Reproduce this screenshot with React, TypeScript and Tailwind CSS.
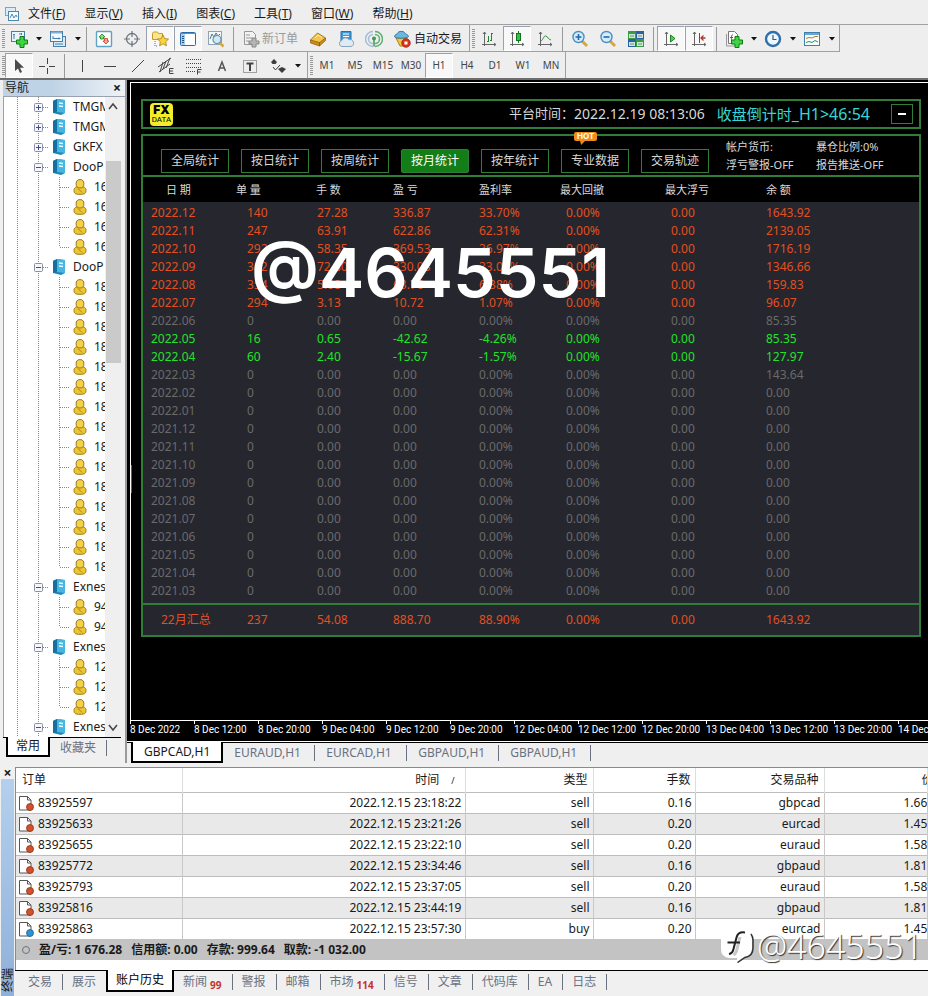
import type { ReactNode } from "react";
import clsx from "clsx";

/* ---------- icons ---------- */

const Svg = ({ children, size = 18 }: { children: ReactNode; size?: number }) => (
  <svg width={size} height={size} viewBox="0 0 18 18" fill="none" className="shrink-0" aria-hidden="true">
    {children}
  </svg>
);

const Plus = () => (
  <path d="M10 6.500h4v3.500h3.500v4H14v3.500h-4V14H6.500v-4H10z" fill="#3fd542" stroke="#0b7d12" />
);

const Axes = () => (
  <path d="M4.500 2v14M2 14.500h14M3 4l1.500-2L6 4M14 13l2 1.500-2 1.500" stroke="#666" />
);

const icons = {
  newChart: (
    <Svg>
      <rect x="1.500" y="1.500" width="13" height="10" fill="#eaf4fb" stroke="#4580ab" />
      <path d="M4 4v5M3 5l1-1 1 1M9 4h3M11 3l1 1-1 1" stroke="#4580ab" />
      <Plus />
    </Svg>
  ),
  profiles: (
    <Svg>
      <rect x="4.500" y="6.500" width="12" height="10" fill="#d9eaf6" stroke="#4580ab" />
      <rect x="1.500" y="1.500" width="12" height="10" fill="#f3f9fd" stroke="#4580ab" />
      <path d="M2 2.500h11" stroke="#7fb1d4" strokeWidth="2" />
      <path d="M4 6v3M4 8.500h7M10 7.500l1 1-1 1M6 14h8" stroke="#4580ab" />
    </Svg>
  ),
  market: (
    <Svg>
      <rect x="1.500" y="1.500" width="15" height="15" rx="1" fill="#fdfefe" stroke="#5fa3c4" strokeWidth="1.400" />
      <path d="M7 4l3 3H8.500v2h-3V7H4z" fill="#8fe07a" stroke="#16801c" strokeWidth=".8" />
      <path d="M11 14l-3-3h1.500V8.500h3V11H14z" fill="#fba58f" stroke="#c03a22" strokeWidth=".8" />
    </Svg>
  ),
  target: (
    <Svg>
      <circle cx="9" cy="9" r="5.500" stroke="#6c757e" strokeWidth="1.300" />
      <path d="M9 1v6M9 11v6M1 9h6M11 9h6" stroke="#6c757e" strokeWidth="1.200" />
    </Svg>
  ),
  star: (
    <Svg>
      <path d="M1.500 3.500l1-1.500h4l1 1.500h4v6h-10z" fill="#fbe58a" stroke="#c79a22" />
      <path d="M4 11v5h3" stroke="#777" strokeDasharray="1 1" />
      <path d="M12 5l1.700 3.600 3.800.5-2.800 2.700.7 4-3.400-2-3.400 2 .7-4L6.500 9.100l3.800-.5z" fill="#fbd33a" stroke="#a97c12" strokeWidth=".8" />
    </Svg>
  ),
  dataWindow: (
    <Svg>
      <rect x="1.500" y="2.500" width="15" height="13" rx="1" fill="#fdfefe" stroke="#2a6cab" />
      <path d="M2 3.500h14" stroke="#4f94cf" />
      <rect x="2" y="4" width="4" height="11" fill="#a8cdea" />
      <path d="M3 6.500h2M3 8.500h2M3 10.500h2M3 12.500h2" stroke="#24527e" />
    </Svg>
  ),
  tester: (
    <Svg>
      <rect x="1.500" y="1.500" width="13" height="13" fill="#f4f7f9" stroke="#92a3b0" />
      <path d="M3 9l2-5 2 3 2-4 2 3 2-2" stroke="#577" />
      <path d="M12.500 12.500l4 4" stroke="#d9a441" strokeWidth="2.500" />
      <circle cx="10" cy="9.500" r="4" fill="#cfe6f5" fillOpacity=".85" stroke="#5b92ba" strokeWidth="1.200" />
    </Svg>
  ),
  order: (
    <Svg>
      <path d="M2.500 1.500h8l3 3v10h-11z" fill="#f2f2f2" stroke="#989898" />
      <path d="M4 5h4M4 8h6M4 11h3" stroke="#989898" />
      <path d="M10 8h4v3h3v3h-3v3h-4v-3H7v-3h3z" fill="#b5b5b5" stroke="#888" />
    </Svg>
  ),
  gold: (
    <Svg>
      <path d="M1.500 10l7-7 8 5-6 7z" fill="#f3c746" stroke="#a9771a" />
      <path d="M1.500 10l9 2.500v3.500L1.500 13zM10.500 12.500l6-4.500v2.500l-6 5.500z" fill="#c98b22" stroke="#8b5c10" strokeWidth=".7" />
      <path d="M6 8l3-3 4 2.500" stroke="#fdeeb0" />
    </Svg>
  ),
  cloud: (
    <Svg>
      <path d="M4 1.500h10v10H4z" fill="#3f9bd8" stroke="#2273ab" />
      <path d="M6 4h6M6 6.500h6" stroke="#fff" />
      <path d="M5 16.500a3 3 0 01-.3-5.900A4 4 0 0112 9.800a3.400 3.400 0 012 6.700z" fill="#dfeaf3" stroke="#86a4c0" />
    </Svg>
  ),
  signal: (
    <Svg>
      <path d="M10 4.500a4.500 4.500 0 010 9M10 1.500a7.500 7.500 0 010 15" stroke="#5fae72" strokeWidth="1.500" />
      <path d="M8 4.500a4.500 4.500 0 000 9M8 1.500a7.500 7.500 0 000 15" stroke="#a3bfd6" strokeWidth="1.500" />
      <circle cx="9" cy="8.500" r="2" fill="#3c9b50" />
      <path d="M9 9v7.500" stroke="#3c9b50" strokeWidth="1.500" />
    </Svg>
  ),
  auto: (
    <Svg>
      <path d="M3 8h11l-3 8H7z" fill="#f2c53b" stroke="#b07f15" />
      <path d="M1.500 6.500c0-2 3-2 3.500-4 .5-1.500 6-1.500 6.500 0 .5 2 4 2 4 4s-14 2.500-14 0z" fill="#6fb6dd" stroke="#3678a3" />
      <circle cx="13" cy="13" r="4.300" fill="#d8351d" stroke="#9b1d0c" strokeWidth=".7" />
      <rect x="11.500" y="11.500" width="3" height="3" fill="#fff" />
    </Svg>
  ),
  bars: (
    <Svg>
      <Axes />
      <path d="M8.500 6v6M7 11.500h1.500M11.500 3v8M11.500 3.500H13M10 10.500h1.500" stroke="#1d8a2c" />
    </Svg>
  ),
  candles: (
    <Svg>
      <Axes />
      <path d="M10.500 1v12" stroke="#1d7a2a" />
      <rect x="8.500" y="3.500" width="4" height="7" fill="#35c244" stroke="#15701f" />
    </Svg>
  ),
  line: (
    <Svg>
      <Axes />
      <path d="M5 11c2-1 3-6 5-5 2 1 2 3 5 4" stroke="#2c8f3a" />
    </Svg>
  ),
  zoomIn: (
    <Svg>
      <path d="M11 11l5 5" stroke="#d8a73d" strokeWidth="3" />
      <circle cx="7.500" cy="7" r="5.500" fill="#d4ebfa" stroke="#4a8fc2" strokeWidth="1.400" />
      <path d="M4.500 7h6M7.500 4v6" stroke="#2368a2" strokeWidth="1.600" />
    </Svg>
  ),
  zoomOut: (
    <Svg>
      <path d="M11 11l5 5" stroke="#d8a73d" strokeWidth="3" />
      <circle cx="7.500" cy="7" r="5.500" fill="#d4ebfa" stroke="#4a8fc2" strokeWidth="1.400" />
      <path d="M4.500 7h6" stroke="#2368a2" strokeWidth="1.600" />
    </Svg>
  ),
  tile: (
    <Svg>
      <rect x="1" y="1" width="8" height="8" fill="#3a9a45" />
      <rect x="9" y="1" width="8" height="8" fill="#2c5fa6" />
      <rect x="1" y="9" width="8" height="8" fill="#2c5fa6" />
      <rect x="9" y="9" width="8" height="8" fill="#3a9a45" />
      <path d="M2 4h6v4H2zM10 4h6v4h-6zM2 12h6v4H2zM10 12h6v4h-6z" fill="#cfe6d6" />
      <path d="M3 6h4M11 6h4M3 14h4M11 14h4" stroke="#5b9a72" />
    </Svg>
  ),
  scroll: (
    <Svg>
      <Axes />
      <path d="M8.500 5v7l4.500-3.500z" fill="#5ecb55" stroke="#17841f" />
    </Svg>
  ),
  shift: (
    <Svg>
      <Axes />
      <path d="M9.500 3v10" stroke="#555" />
      <path d="M15.500 8h-4M13.500 5.500L11 8l2.500 2.500" stroke="#b0382c" strokeWidth="1.300" />
    </Svg>
  ),
  indicators: (
    <Svg>
      <path d="M3.500 1.500h6l3 3v9h-9z" fill="#fff" stroke="#777" />
      <path d="M1.500 4v12h9" stroke="#999" />
      <path d="M8 5c-2-.5-1.500 2-1.500 6M5 7.500h3" stroke="#555" />
      <Plus />
    </Svg>
  ),
  clock: (
    <Svg>
      <circle cx="9" cy="9" r="7" fill="#eef7fd" stroke="#2f6fae" strokeWidth="2.400" />
      <path d="M9 5v4.500h3.500" stroke="#3a5a78" strokeWidth="1.200" />
    </Svg>
  ),
  template: (
    <Svg>
      <rect x="1.500" y="2.500" width="15" height="13" fill="#fafdfe" stroke="#3f7fae" />
      <path d="M2 4h14" stroke="#68a8d6" strokeWidth="2" />
      <path d="M3 8.500l3-1 3 .5 3-1.500h3" stroke="#b57a25" />
      <path d="M3 12.500l3-1 3 1 3-2 3 1.500" stroke="#2c8f6a" />
    </Svg>
  ),
  cursor: (
    <Svg>
      <path d="M5 2v12l3-2.500 2 4.500 2-1-2-4.200h4z" fill="#4a4a4a" />
    </Svg>
  ),
  cross: (
    <Svg>
      <path d="M9.500 1v6M9.500 11v6M1 9.500h6M11 9.500h6" stroke="#444" />
    </Svg>
  ),
  vline: (
    <Svg>
      <path d="M9.500 3v12" stroke="#444" />
    </Svg>
  ),
  hline: (
    <Svg>
      <path d="M3 9.500h12" stroke="#444" />
    </Svg>
  ),
  trend: (
    <Svg>
      <path d="M3 15L15 3" stroke="#444" />
    </Svg>
  ),
  channel: (
    <Svg>
      <path d="M1 10L14 1M2 15L13 7M6 5L3 15M9 4L6 12M13 1L9 11" stroke="#444" />
      <path d="M16.500 11.500h-4v5h4M12.500 14h3.500" stroke="#444" />
    </Svg>
  ),
  fibo: (
    <Svg>
      <path d="M1 2.500h15M1 6.500h15M1 10.500h15M1 14.500h9" stroke="#444" strokeDasharray="1 1" />
      <path d="M16.500 12.500h-4v5M12.500 15h3" stroke="#444" />
    </Svg>
  ),
  textA: (
    <Svg>
      <path d="M5.500 14L9 5l3.500 9M7 11h4" stroke="#555" strokeWidth="1.500" />
    </Svg>
  ),
  label: (
    <Svg>
      <rect x="2.500" y="3.500" width="13" height="12" stroke="#555" strokeDasharray="1 1" />
      <path d="M5.500 6.500h7M9 6v8" stroke="#444" strokeWidth="2" />
    </Svg>
  ),
  arrows: (
    <Svg>
      <path d="M2 5l3-3 3 3-1.500 2h-3zM9 12l4-2 4 2-4 4z" fill="#3c3c3c" />
      <path d="M4 10l2.500 3L11 8" stroke="#3c3c3c" />
    </Svg>
  ),
};

type IconName = keyof typeof icons;

const BookIcon = () => (
  <svg width="14" height="18" viewBox="0 0 14 18" className="shrink-0" aria-hidden="true">
    <path d="M1 3l4-2 8 1v13l-4 2-8-2z" fill="#1e86b8" />
    <path d="M5 1l8 1v13l-8-1z" fill="#44b6e0" />
    <path d="M1 3l4-2v13l-4 1z" fill="#166f9e" />
    <path d="M7 5l4 .5M7 8l4 .5" stroke="#e9f8ff" strokeWidth="1.300" />
  </svg>
);

const UserIcon = () => (
  <svg width="14" height="16" viewBox="0 0 14 16" className="shrink-0" aria-hidden="true">
    <path d="M1 11.500C1 8.500 3 7.500 7 7.500s6 1 6 4c0 3-1.500 3.800-6 3.800S1 14.500 1 11.500z" fill="#edc531" stroke="#98761a" />
    <ellipse cx="7" cy="4.800" rx="3.900" ry="4.200" fill="#f3d24a" stroke="#98761a" />
    <path d="M5 9.500l4 4" stroke="#a98420" />
  </svg>
);

const DocIcon = ({ buy }: { buy?: boolean }) => (
  <svg width="15" height="16" viewBox="0 0 15 16" className="shrink-0" aria-hidden="true">
    <path d="M.5 1.500h8l3.500 3.500v10H.5z" fill="#fff" stroke="#555" />
    <path d="M8.500 1.500V5H12" fill="none" stroke="#555" />
    <circle cx="11" cy="12" r="3.500" fill={buy ? "#2f93cf" : "#d2502c"} stroke={buy ? "#1c6496" : "#8f2f14"} strokeWidth=".8" />
  </svg>
);

/* ---------- toolbars ---------- */

const menus = [
  ["文件", "F"],
  ["显示", "V"],
  ["插入", "I"],
  ["图表", "C"],
  ["工具", "T"],
  ["窗口", "W"],
  ["帮助", "H"],
];

function Tool({ icon, label, active }: { icon: IconName; label: string; active?: boolean }) {
  return (
    <button
      aria-label={label}
      className={clsx(
        "flex h-[25px] w-7 shrink-0 items-center justify-center border",
        active ? "border-t-gray-400 border-l-gray-400 border-r-white border-b-white bg-[#f8f8f8]" : "border-transparent"
      )}
    >
      {icons[icon]}
    </button>
  );
}

const Caret = () => (
  <button aria-label="更多" className="flex h-6 w-[11px] shrink-0 items-center justify-center">
    <svg width="6" height="4" viewBox="0 0 6 4" aria-hidden="true">
      <path d="M0 0h6L3 3.500z" fill="#111" />
    </svg>
  </button>
);

const Sep = () => (
  <div className="flex w-[7px] shrink-0 justify-center">
    <div className="h-6 w-px bg-[#9a9a9a]" />
  </div>
);

const Grip = () => <div className="ml-[2px] h-5 w-[3px] shrink-0 bg-[repeating-linear-gradient(#999_0_1px,transparent_1px_2px)]" />;

function Toolbars() {
  return (
    <header className="bg-[#eeeeee]">
      <nav className="mt-1 flex h-[21px] items-center border-b border-[#a0a0a0] pl-1">
        <svg width="16" height="16" viewBox="0 0 16 16" fill="none" aria-hidden="true">
          <rect x="1.500" y="1.500" width="10" height="8" fill="#d9ecf7" stroke="#79a7c4" />
          <rect x="4.500" y="5.500" width="10" height="9" fill="#f5fbff" stroke="#4b87ad" />
          <path d="M6 12l2-4 2 4 2-3 1 2" stroke="#4b87ad" />
        </svg>
        <div className="flex gap-[19px] pl-2">
          {menus.map(([name, key]) => (
            <button key={key} className="whitespace-nowrap">
              {name}(<u>{key}</u>)
            </button>
          ))}
        </div>
      </nav>

      <div className="flex">
        <div className="flex h-[27px] items-center border-r border-b border-[#a0a0a0] pt-px pr-[2px]">
          <Grip />
          <Tool icon="newChart" label="新图表" />
          <Caret />
          <Tool icon="profiles" label="配置文件" />
          <Caret />
          <Sep />
          <Tool icon="market" label="市场报价" />
          <Tool icon="target" label="数据窗口" />
          <Tool icon="star" label="导航" active />
          <Tool icon="dataWindow" label="终端" active />
          <Tool icon="tester" label="策略测试" />
          <Sep />
          <button disabled className="flex w-[67px] shrink-0 items-center gap-[2px] pl-[5px] whitespace-nowrap text-[#9a9a9a]">
            {icons.order}新订单
          </button>
          <Tool icon="gold" label="编辑器" />
          <Tool icon="cloud" label="云" />
          <Tool icon="signal" label="信号" />
          <button className="flex w-[79px] shrink-0 items-center gap-[3px] pl-[5px] whitespace-nowrap">
            {icons.auto}自动交易
          </button>
        </div>
        <div className="flex h-[27px] items-center border-r border-b border-[#a0a0a0] pt-px pr-[2px]">
          <Grip />
          <Tool icon="bars" label="柱状图" />
          <Tool icon="candles" label="蜡烛图" active />
          <Tool icon="line" label="折线图" />
          <Sep />
          <Tool icon="zoomIn" label="放大" />
          <Tool icon="zoomOut" label="缩小" />
          <Tool icon="tile" label="平铺" />
          <Sep />
          <Tool icon="scroll" label="自动滚动" active />
          <Tool icon="shift" label="图表平移" active />
          <Sep />
          <Tool icon="indicators" label="指标" />
          <Caret />
          <Tool icon="clock" label="时间周期" />
          <Caret />
          <Tool icon="template" label="模板" />
          <Caret />
        </div>
      </div>

      <div className="flex border-b-2 border-[#6e6e6e]">
        <div className="flex h-[26px] items-center border-r border-[#a0a0a0] pt-px pr-1">
          <Grip />
          <Tool icon="cursor" label="光标" active />
          <Tool icon="cross" label="十字线" />
          <Sep />
          <Tool icon="vline" label="垂直线" />
          <Tool icon="hline" label="水平线" />
          <Tool icon="trend" label="趋势线" />
          <Tool icon="channel" label="通道" />
          <Tool icon="fibo" label="斐波那契" />
          <Tool icon="textA" label="文字" />
          <Tool icon="label" label="标签" />
          <Tool icon="arrows" label="箭头" />
          <Caret />
        </div>
        <div className="flex h-[26px] items-center border-r border-[#a0a0a0] pt-px">
          <Grip />
          {["M1", "M5", "M15", "M30", "H1", "H4", "D1", "W1", "MN"].map((t) => (
            <button
              key={t}
              className={clsx(
                "h-[25px] w-7 border pt-px text-[10px] text-[#444]",
                t === "H1" ? "border-t-gray-400 border-l-gray-400 border-r-white border-b-white bg-[#f8f8f8]" : "border-transparent"
              )}
            >
              {t}
            </button>
          ))}
        </div>
      </div>
    </header>
  );
}

/* ---------- navigator ---------- */

const tree = [
  { name: "TMGM" },
  { name: "TMGM" },
  { name: "GKFX" },
  { name: "DooP", child: "16", count: 4 },
  { name: "DooP", child: "18", count: 15 },
  { name: "Exnes", child: "94", count: 2 },
  { name: "Exnes", child: "12", count: 3 },
  { name: "Exnes", child: "12", count: 0 },
];

function Navigator() {
  return (
    <aside className="flex w-[127px] shrink-0 flex-col border-r-2 border-[#9a9a9a] bg-[#f0f0f0] pl-[3px]">
      <div className="flex h-[17px] items-center justify-between border-b border-gray-400 bg-linear-to-r from-[#bfd3e6] from-40% to-[#eef3f7] pr-1 pl-[2px] leading-4">
        导航
        <button aria-label="关闭" className="text-sm leading-none font-bold">×</button>
      </div>
      <div className="flex border-l border-gray-400">
        <ul className="min-w-0 flex-1 overflow-hidden bg-white">
          {tree.map((g, i) => (
            <li key={i}>
              <div className="flex h-5 items-center">
                <svg width="48" height="20" viewBox="0 0 48 20" fill="none" className="shrink-0" aria-hidden="true">
                  <path d="M13.500 0v20M34.500 0v20M35 10.500h10" stroke="#888" strokeDasharray="1 1" />
                  <rect x="30.500" y="6.500" width="8" height="8" rx="1" fill="#f5f5fa" stroke="#8a8fa5" />
                  <path d={g.child ? "M32 10.500h5" : "M32 10.500h5M34.500 8v5"} stroke="#3b4f94" />
                </svg>
                <BookIcon />
                <span className="pl-[7px] whitespace-nowrap">{g.name}</span>
              </div>
              {Array.from({ length: g.count ?? 0 }, (_, n) => (
                <div key={n} className="flex h-5 items-center">
                  <svg width="69" height="20" viewBox="0 0 69 20" fill="none" className="shrink-0" aria-hidden="true">
                    <path
                      d={`M13.500 0v20M34.500 0v20M55.500 0v${n + 1 === g.count ? 10 : 20}M56 10.500h10`}
                      stroke="#888"
                      strokeDasharray="1 1"
                    />
                  </svg>
                  <UserIcon />
                  <span className="pl-[7px]">{g.child}</span>
                </div>
              ))}
            </li>
          ))}
        </ul>
        <div className="mr-1 flex w-4 flex-col items-center bg-[#efefef]">
          <svg width="10" height="20" viewBox="0 0 10 20" fill="none" aria-hidden="true">
            <path d="M1 12l4-5 4 5" stroke="#444" strokeWidth="1.500" />
          </svg>
          <div className="mt-11 h-[202px] w-[15px] bg-[#cacaca]" />
          <svg width="10" height="20" viewBox="0 0 10 20" fill="none" className="mt-auto" aria-hidden="true">
            <path d="M1 8l4 5 4-5" stroke="#444" strokeWidth="1.500" />
          </svg>
        </div>
      </div>
      <div className="flex pr-1 leading-[18px]">
        <div className="w-[3px] border-t border-black" />
        <button className="border-x-2 border-b-2 border-black bg-white px-2">常用</button>
        <div className="flex flex-1 items-center border-t border-black pl-[10px] text-gray-500">
          <button>收藏夹</button>
          <span className="ml-[10px] h-4 w-px bg-gray-500" />
        </div>
      </div>
    </aside>
  );
}

/* ---------- chart panel ---------- */

const Z = ["0", "0.00", "0.00", "0.00%", "0.00%", "0.00"];

const months = [
  ["2022.12", "140", "27.28", "336.87", "33.70%", "0.00%", "0.00", "1643.92"],
  ["2022.11", "247", "63.91", "622.86", "62.31%", "0.00%", "0.00", "2139.05"],
  ["2022.10", "292", "58.35", "369.53", "36.97%", "0.00%", "0.00", "1716.19"],
  ["2022.09", "302", "72.80", "330.03", "33.02%", "0.00%", "0.00", "1346.66"],
  ["2022.08", "354", "5.08", "63.76", "6.38%", "0.00%", "0.00", "159.83"],
  ["2022.07", "294", "3.13", "10.72", "1.07%", "0.00%", "0.00", "96.07"],
  ["2022.06", ...Z, "85.35"],
  ["2022.05", "16", "0.65", "-42.62", "-4.26%", "0.00%", "0.00", "85.35"],
  ["2022.04", "60", "2.40", "-15.67", "-1.57%", "0.00%", "0.00", "127.97"],
  ["2022.03", ...Z, "143.64"],
  ["2022.02", ...Z, "0.00"],
  ["2022.01", ...Z, "0.00"],
  ["2021.12", ...Z, "0.00"],
  ["2021.11", ...Z, "0.00"],
  ["2021.10", ...Z, "0.00"],
  ["2021.09", ...Z, "0.00"],
  ["2021.08", ...Z, "0.00"],
  ["2021.07", ...Z, "0.00"],
  ["2021.06", ...Z, "0.00"],
  ["2021.05", ...Z, "0.00"],
  ["2021.04", ...Z, "0.00"],
  ["2021.03", ...Z, "0.00"],
];

const columns = [
  { name: "日 期", col: "w-[93px]", head: "pl-[23px]", cell: "pl-2" },
  { name: "单 量", col: "w-[80px]", head: "", cell: "pl-[11px]" },
  { name: "手 数", col: "w-[77px]", head: "", cell: "pl-px" },
  { name: "盈 亏", col: "w-[86px]", head: "", cell: "" },
  { name: "盈利率", col: "w-[81px]", head: "", cell: "" },
  { name: "最大回撤", col: "w-[105px]", head: "", cell: "pl-[6px]" },
  { name: "最大浮亏", col: "w-[101px]", head: "", cell: "pl-[6px]" },
  { name: "余 额", col: "", head: "", cell: "" },
];

const rowColor = (row: string[]) => {
  if (row[1] === "0") return "text-[#6a6a6a]";
  return row[3].startsWith("-") ? "text-[#22e32a]" : "text-[#e2501f]";
};

const total = ["22月汇总", "237", "54.08", "888.70", "88.90%", "0.00%", "0.00", "1643.92"];

const statTabs = ["全局统计", "按日统计", "按周统计", "按月统计", "按年统计", "专业数据", "交易轨迹"];

const times = [
  "8 Dec 2022", "8 Dec 12:00", "8 Dec 20:00", "9 Dec 04:00", "9 Dec 12:00", "9 Dec 20:00", "12 Dec 04:00",
  "12 Dec 12:00", "12 Dec 20:00", "13 Dec 04:00", "13 Dec 12:00", "13 Dec 20:00", "14 Dec 04:00",
];

const GREEN = "border-[#2f7d36]";

function Stats() {
  return (
    <div className="text-[#d8d8d8]">
      <div className={clsx("flex h-[30px] items-center justify-end border-2 pr-1.5 pl-[7px]", GREEN)}>
        <div className="mr-auto flex size-[23px] flex-col items-center justify-center rounded-sm bg-[#f4ee2a] text-black">
          <b className="font-[Inter] text-[12px] leading-[10px] font-black">FX</b>
          <span className="font-[Roboto] text-[8px] leading-[9px]">DATA</span>
        </div>
        <span className="text-[13px]">平台时间：</span>
        <span className="text-sm">2022.12.19 08:13:06</span>
        <span className="pl-3 text-[15px] text-[#35d6d6]">
          收盘倒计时<span className="text-base">_H1&gt;46:54</span>
        </span>
        <button aria-label="最小化" className={clsx("ml-[21px] flex h-5 w-[22px] items-center justify-center border", GREEN)}>
          <span className="h-[2px] w-2 bg-white" />
        </button>
      </div>

      <div className={clsx("mt-[5px] border-2", GREEN)}>
        <div className={clsx("flex h-[41px] items-end border-b-2 pl-[18px]", GREEN)}>
          <div className="flex gap-3 pb-[2px]">
            {statTabs.map((t) => (
              <button
                key={t}
                className={clsx(
                  "relative h-6 w-[68px] border whitespace-nowrap",
                  GREEN,
                  t === "按月统计" && "rounded-xs bg-[#137d17] text-white"
                )}
              >
                {t}
                {t === "专业数据" && (
                  <span className="absolute -top-[18px] left-3 rounded-xs bg-[#f08a1d] px-[3px] font-[Inter] text-[8px] leading-[9px] font-bold text-white">
                    HOT
                    <svg width="6" height="5" viewBox="0 0 6 5" className="absolute top-2 left-1.5" aria-hidden="true">
                      <path d="M0 0h6L1 5z" fill="#f08a1d" />
                    </svg>
                  </span>
                )}
              </button>
            ))}
          </div>
          <div className="grid grid-cols-[90px_auto] self-center pl-[17px] text-[11px] leading-[18px] whitespace-nowrap">
            <span>帐户货币:</span>
            <span>暴仓比例:0%</span>
            <span>浮亏警报-OFF</span>
            <span>报告推送-OFF</span>
          </div>
        </div>

        <table className="w-full table-fixed bg-[#25262e] text-left leading-[18px]">
          <colgroup>
            {columns.map((c) => (
              <col key={c.name} className={c.col} />
            ))}
          </colgroup>
          <thead>
            <tr>
              {columns.map((c) => (
                <th key={c.name} className={clsx("h-[26px] border-b-2 border-[#25262e] bg-black text-[11px] font-normal", c.head)}>
                  {c.name}
                </th>
              ))}
            </tr>
          </thead>
          <tbody>
            {months.map((row) => (
              <tr key={row[0]} className={clsx(rowColor(row), "last:[&>td]:pb-[3px]")}>
                {row.map((v, i) => (
                  <td key={i} className={columns[i].cell}>
                    {v}
                  </td>
                ))}
              </tr>
            ))}
          </tbody>
          <tfoot>
            <tr className="h-[31px] text-[#e2501f]">
              {total.map((v, i) => (
                <td key={i} className={clsx("border-t-2", GREEN, i === 0 ? "pl-[18px]" : columns[i].cell)}>
                  {v}
                </td>
              ))}
            </tr>
          </tfoot>
        </table>
      </div>
    </div>
  );
}

function Chart() {
  return (
    <main className="flex min-w-0 flex-1 flex-col bg-[#efefef]">
      <div className="relative flex flex-1 flex-col bg-black pt-[2px] pl-[3px]">
        <div className="flex-1 border-t border-l border-white pt-4 pr-[7px] pl-[10px]">
          <Stats />
        </div>
        <div className="flex h-[21px] overflow-hidden border-t border-white font-[Roboto] text-[10px] text-white">
          {times.map((t) => (
            <div key={t} className="w-16 shrink-0 leading-[11px] whitespace-nowrap">
              <div className="h-[3px] w-px bg-white" />
              {t}
            </div>
          ))}
        </div>
        {/* price bar peeking out at the left edge */}
        <div className="absolute top-[385px] left-1 h-7 w-px bg-[#e0301c]" />
        <div className="pointer-events-none absolute top-[158px] left-[124px] font-[Inter] text-[68px] leading-none font-semibold text-white">
          @4645551
        </div>
      </div>
      <div className="flex h-[22px] border-t border-white leading-5">
        <div className="w-1 border-t border-black" />
        <button className="border-x-2 border-b-2 border-black bg-white px-[11px]">GBPCAD,H1</button>
        <div className="flex flex-1 items-center border-t border-black text-gray-500">
          {["EURAUD,H1", "EURCAD,H1", "GBPAUD,H1", "GBPAUD,H1"].map((t, i) => (
            <div key={i} className="flex w-[92px] items-center justify-between">
              <button className="pl-[11px]">{t}</button>
              <span className="h-4 w-px bg-gray-500" />
            </div>
          ))}
        </div>
      </div>
    </main>
  );
}

/* ---------- terminal ---------- */

const orders = [
  ["83925597", "2022.12.15 23:18:22", "sell", "0.16", "gbpcad", "1.66"],
  ["83925633", "2022.12.15 23:21:26", "sell", "0.20", "eurcad", "1.45"],
  ["83925655", "2022.12.15 23:22:10", "sell", "0.20", "euraud", "1.58"],
  ["83925772", "2022.12.15 23:34:46", "sell", "0.16", "gbpaud", "1.81"],
  ["83925793", "2022.12.15 23:37:05", "sell", "0.20", "euraud", "1.58"],
  ["83925816", "2022.12.15 23:44:19", "sell", "0.16", "gbpaud", "1.81"],
  ["83925863", "2022.12.15 23:57:30", "buy", "0.20", "eurcad", "1.45"],
];

const bottomTabs: { name: string; badge?: string }[] = [
  { name: "交易" },
  { name: "展示" },
  { name: "账户历史" },
  { name: "新闻", badge: "99" },
  { name: "警报" },
  { name: "邮箱" },
  { name: "市场", badge: "114" },
  { name: "信号" },
  { name: "文章" },
  { name: "代码库" },
  { name: "EA" },
  { name: "日志" },
];

function Terminal() {
  return (
    <section className="relative flex bg-[#f0f0f0] pt-1">
      <div className="flex w-[15px] shrink-0 flex-col items-center">
        <button aria-label="关闭" className="h-3 text-sm leading-[10px] font-bold">×</button>
        <div className="flex w-[13px] flex-1 items-end justify-center bg-linear-to-b from-[#b5d0ee] to-[#8fb0d8] pb-1">
          <span className="rotate-180 leading-3 [text-orientation:sideways] [writing-mode:vertical-rl]">终端</span>
        </div>
      </div>
      <div className="min-w-0 flex-1 overflow-hidden">
        <div className="border-t border-l border-[#8a8a8a] bg-white pb-[10px]">
          <table className="w-full table-fixed text-right whitespace-nowrap">
            <colgroup>
              <col className="w-[166px]" />
              <col className="w-[283px]" />
              <col className="w-[128px]" />
              <col className="w-[102px]" />
              <col className="w-[129px]" />
              <col />
            </colgroup>
            <thead>
              <tr className="h-6 [&>th]:border-r [&>th]:border-[#dddddd] [&>th]:font-normal">
                <th className="pl-[6px] text-left">订单</th>
                <th className="pr-[10px]">
                  时间<span className="pl-3 text-[9px]">/</span>
                </th>
                <th className="pr-[5px]">类型</th>
                <th className="pr-1">手数</th>
                <th className="pr-[5px]">交易品种</th>
                <th className="overflow-hidden pl-[97px] text-left">价格</th>
              </tr>
            </thead>
            <tbody>
              {orders.map((o, i) => (
                <tr
                  key={o[0]}
                  className={clsx(
                    "h-[21px] border-t border-[#bdbdbd] [&>td]:border-r [&>td]:border-[#c8c8c8] [&>td]:pr-[3px]",
                    i % 2 && "bg-[#e9e9e9]"
                  )}
                >
                  <td>
                    <div className="flex items-center gap-1 pl-[3px]">
                      <DocIcon buy={o[2] === "buy"} />
                      {o[0]}
                    </div>
                  </td>
                  {o.slice(1, 5).map((v, n) => (
                    <td key={n}>{v}</td>
                  ))}
                  <td className="overflow-hidden pl-[79px] text-left">{o[5]}</td>
                </tr>
              ))}
            </tbody>
          </table>
          <div className="flex h-[21px] items-center gap-[9px] bg-[#c3c3c3] pl-[6px] font-bold">
            <span className="size-2 rounded-full border border-gray-500" />
            <span>盈/亏: 1 676.28</span>
            <span>信用额: 0.00</span>
            <span>存款: 999.64</span>
            <span>取款: -1 032.00</span>
          </div>
        </div>
        <div className="flex h-[26px] text-gray-500">
          {bottomTabs.map(({ name, badge }, i) =>
            name === "账户历史" ? (
              <button key={name} className="h-[22px] border-x-2 border-b-2 border-black bg-white px-2 text-black">
                {name}
              </button>
            ) : (
              <div key={name} className="flex h-[22px] items-center border-t border-black">
                <button className={clsx("flex pr-[10px]", i ? "pl-[9px]" : "pl-[13px]")}>
                  {name}
                  {badge && <span className="pt-1.5 pl-[3px] text-[10px] leading-[10px] font-bold text-[#c62f2f]">{badge}</span>}
                </button>
                {i !== 1 && <span className="h-4 w-px bg-gray-500" />}
              </div>
            )
          )}
          <div className="h-0 flex-1 border-t border-black" />
        </div>
      </div>

      <div className="pointer-events-none absolute right-[5px] bottom-[33px] flex items-center gap-[3px] text-[34px] leading-none font-light text-white [text-shadow:1px_1px_1px_#333]">
        <svg width="34" height="34" viewBox="0 0 34 34" fill="none" aria-hidden="true">
          <path d="M8 1h17q7 1 7 9v9q0 8-8 9l-7 5v-4H9q-8-1-8-9V9q0-7 7-8z" fill="#fff" />
          <path d="M31 5q2 3 2 6v8q0 8-8 9.500L17.500 33.500" stroke="#333" strokeWidth="1.500" />
          <path d="M20 8l-3.500 14q-1 3-3 4" stroke="#c9c9c9" strokeWidth="3" />
          <path d="M25 3.500q-7-1-8.500 5L13.500 20q-1 4.500-4.500 5M7.500 13.500H20" stroke="#222" strokeWidth="2" />
        </svg>
        @4645551
      </div>
    </section>
  );
}

export default function App() {
  return (
    <div className="flex min-h-screen flex-col overflow-hidden bg-white font-['Noto_Sans','Noto_Sans_CJK_SC',sans-serif] text-xs text-[#1a1a1a]">
      <Toolbars />
      <div className="flex flex-1">
        <Navigator />
        <Chart />
      </div>
      <Terminal />
    </div>
  );
}
